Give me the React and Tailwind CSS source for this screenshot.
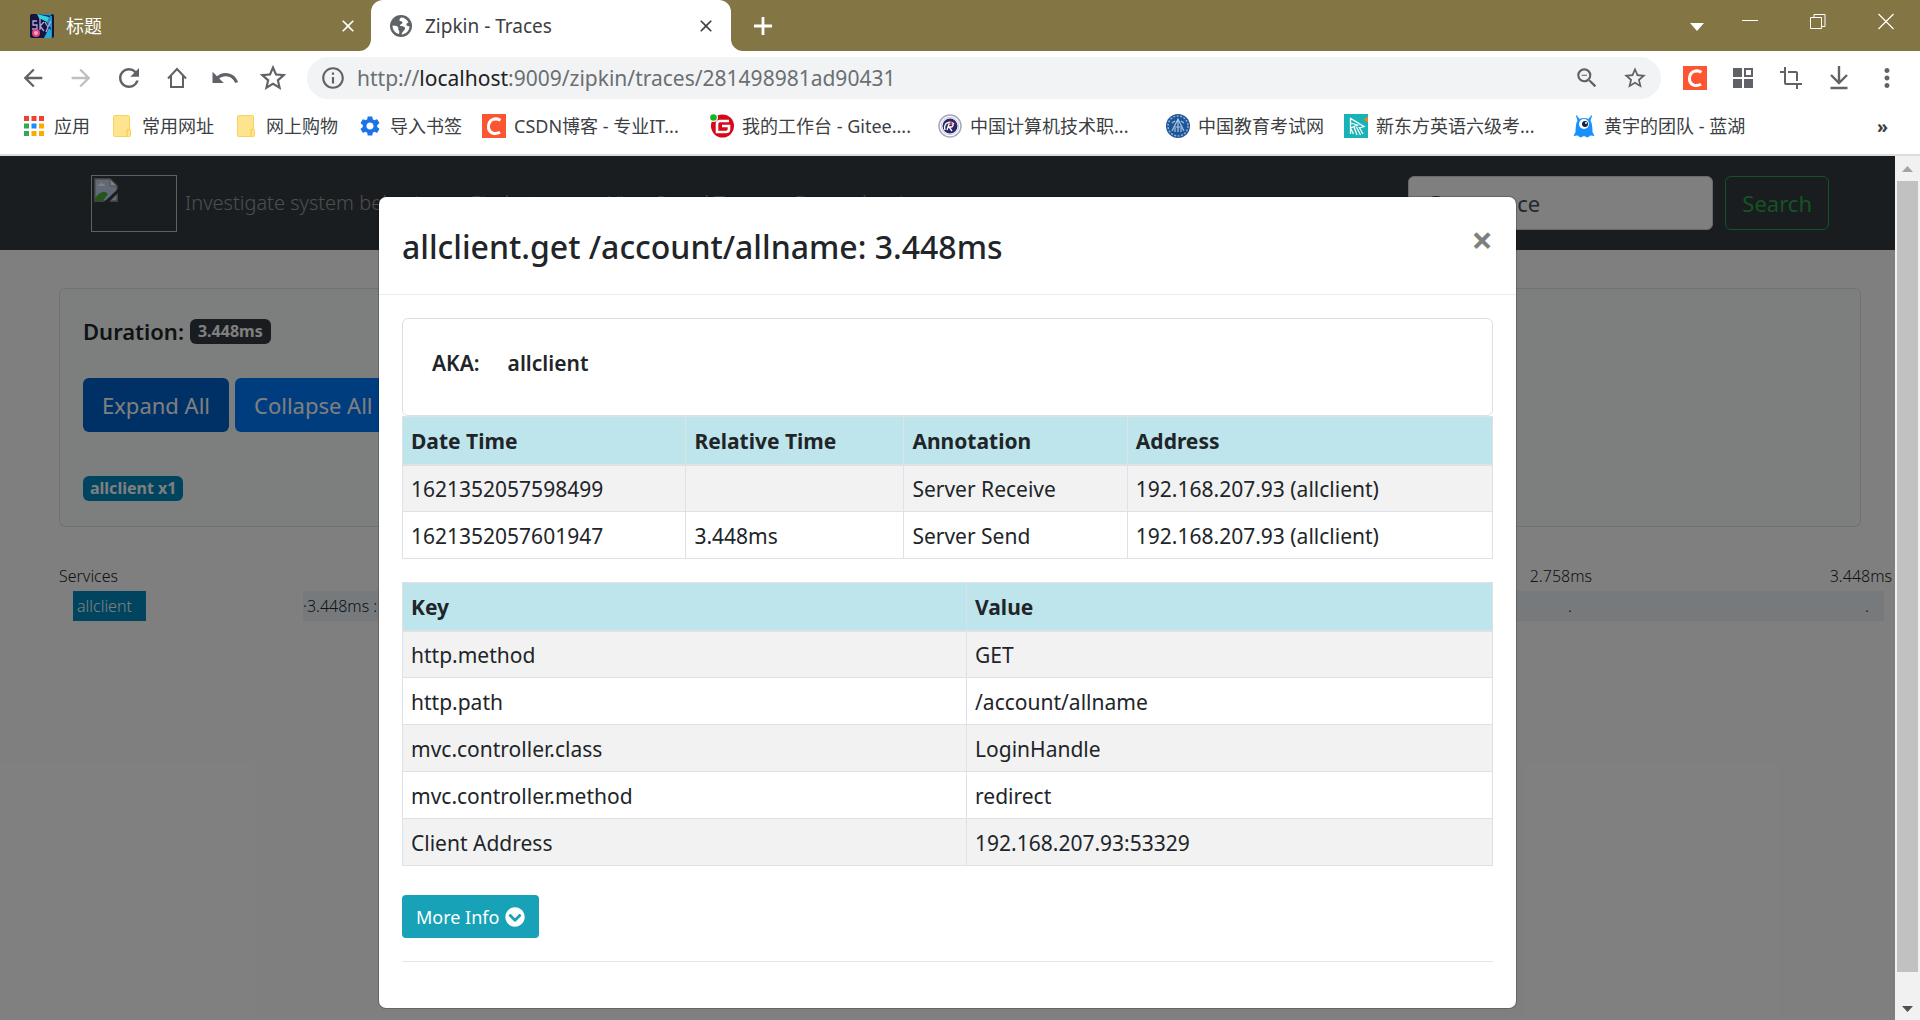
import { useState } from "react";
import {
  MdArrowBack,
  MdArrowForward,
  MdRefresh,
  MdUndo,
  MdStarOutline,
  MdInfoOutline,
  MdZoomOut,
  MdCrop,
  MdMoreVert,
  MdClose,
  MdSettings,
} from "react-icons/md";
import { FaChevronCircleDown } from "react-icons/fa";

const annotations = [
  { time: "1621352057598499", relative: "", name: "Server Receive", address: "192.168.207.93 (allclient)" },
  { time: "1621352057601947", relative: "3.448ms", name: "Server Send", address: "192.168.207.93 (allclient)" },
];

const tags = [
  ["http.method", "GET"],
  ["http.path", "/account/allname"],
  ["mvc.controller.class", "LoginHandle"],
  ["mvc.controller.method", "redirect"],
  ["Client Address", "192.168.207.93:53329"],
];

const timeMarks = ["2.758ms", "3.448ms"];

/* ---------- Icons ---------- */

const SkyIcon = () => (
  <svg className="w-6 h-6" viewBox="0 0 24 24">
    <rect width="24" height="24" rx="2" fill="#14143c" />
    <path d="M6 0h16l-6 7 5 8-3 9h4V2z" fill="#1f8fc4" />
    <path d="M7 0l12 3-2 5-8-4z" fill="#35d0e0" />
    <path d="M14 24l5-10 2 2v8z" fill="#2ba6d8" />
    <path d="M7 7H3v4h4v4H2M10 4v12M14 8l-4 4 4 5M15 8l3 5 3-6M18 13l-2 5" stroke="#b7a7dc" strokeWidth="1.300" fill="none" />
    <circle cx="6" cy="19" r="4" fill="#e0457f" />
    <circle cx="6" cy="19" r="2" fill="#ff9fb4" />
  </svg>
);

const GlobeIcon = () => (
  <svg className="w-[22px] h-[22px]" viewBox="0 0 22 22">
    <circle cx="11" cy="11" r="11" fill="#5f6368" />
    <path d="M11 2.500c-1 1-2 2-1.500 3 .5 1 3 .5 3 2s-2 1.500-2.500 2.500c-.5 1.500 3.500 1 4.500 2s.5 3-1 4c-1 1-1.500 2-2 3.500 5-.5 8-4 8-8.500-1.500.5-2.500 0-3-1s.5-2 2-2.500C17 4.500 14.500 2.500 11 2.500z" fill="#fff" />
    <path d="M2.500 10.500c2 .3 4.500.2 5.500 1.500s-.5 2 .5 3 1 2 .5 4C5 18 2.500 15 2.500 10.500z" fill="#fff" />
  </svg>
);

const HomeIcon = () => (
  <svg className="w-7 h-7" viewBox="0 0 28 28" fill="none" stroke="#5f6368" strokeWidth="2">
    <path d="M5 14.500L14 5l9 9.500M8 12v11h12V12" />
  </svg>
);

const AppsIcon = () => (
  <svg className="w-[20px] h-[20px]" viewBox="0 0 20 20">
    <path d="M0 0h5v5H0zM7.500 0h5v5h-5zM15 0h5v5h-5z" fill="#ea4335" />
    <path d="M0 7.500h5v5H0zM0 15h5v5H0z" fill="#34a853" />
    <path d="M7.500 7.500h5v5h-5z" fill="#1a8cff" />
    <path d="M15 7.500h5v5h-5zM7.500 15h5v5h-5zM15 15h5v5h-5z" fill="#fbab00" />
  </svg>
);

const FolderIcon = () => (
  <svg className="w-[18px] h-[22px]" viewBox="0 0 18 22">
    <path d="M.5 1.500a1 1 0 011-1h14a1 1 0 011 1V14l1 1v5.500a1 1 0 01-1 1h-15a1 1 0 01-1-1z" fill="#ffe48f" stroke="#fbd25b" />
    <path d="M14 21v-6.500h2.500" fill="none" stroke="#f7c948" />
  </svg>
);

const CsdnIcon = () => (
  <svg className="w-6 h-6" viewBox="0 0 24 24">
    <rect width="24" height="24" fill="#fc5531" />
    <path d="M18.500 6.200C14 3.500 7 5 6.500 12s6.500 9 11.500 6.200" stroke="#fff" strokeWidth="3" fill="none" />
  </svg>
);

const GiteeIcon = () => (
  <svg className="w-6 h-6" viewBox="0 0 24 24">
    <circle cx="12.500" cy="12" r="11.500" fill="#d8081b" />
    <path d="M19 7H10q-3 0-3 3v8h9q3 0 3-3v-3h-7" stroke="#fff" strokeWidth="2.600" fill="none" />
    <circle cx="3.500" cy="3.500" r="4.500" fill="#fff" />
    <circle cx="3.500" cy="3.500" r="3.300" fill="#0fb822" />
  </svg>
);

const RuankaoIcon = () => (
  <svg className="w-6 h-6" viewBox="0 0 24 24">
    <circle cx="12" cy="12" r="11" fill="#fff" stroke="#a7a6bd" strokeWidth="1.500" />
    <circle cx="12" cy="12" r="8.700" fill="none" stroke="#c9c8d8" />
    <circle cx="12" cy="12" r="7.500" fill="#29266b" />
    <path d="M7 16c-2-7 5-10 9-6M9 16l2-6h3c2 0 1 3-1 3h-2l3 4" stroke="#fff" strokeWidth="1.300" fill="none" />
    <circle cx="13" cy="9.500" r="1.500" fill="#d33" />
  </svg>
);

const ExamIcon = () => (
  <svg className="w-6 h-6" viewBox="0 0 24 24">
    <circle cx="12" cy="12" r="12" fill="#1d5596" />
    <circle cx="12" cy="12" r="10" fill="none" stroke="#8db0d6" strokeWidth="1.500" strokeDasharray="2 1.500" />
    <path d="M6 17l6-12 6 12M8 13h8M12 6v12M9 18v-4M15 18v-4M6 9l3-2M18 9l-3-2" stroke="#a9c6e3" strokeWidth="1.200" fill="none" />
  </svg>
);

const KoolearnIcon = () => (
  <svg className="w-6 h-6" viewBox="0 0 24 24">
    <rect width="24" height="24" fill="#17b3b6" />
    <path d="M19.500 5.500L24 2.500v6z" fill="#f58220" />
    <path d="M6.500 20V4.500L20 12.500l-5 1.500M6.500 9l7 2-7 3M10 13l3 8M12.500 13l4 8M15 13l4 7M6.500 14l3 6" stroke="#fff" strokeWidth="1.300" fill="none" />
  </svg>
);

const LanhuIcon = () => (
  <svg className="w-6 h-6" viewBox="0 0 24 24">
    <path d="M4.500 1l3 4q4.500-2 9 0l3-4 .5 1-1.500 4.500Q20.500 10 20.500 18l2 4-4-.5-3 2-3.500-1.500-3.500 1.500-3-2-4 .5 2-4Q3.500 10 5.500 6.500L4 2z" fill="#1890ff" />
    <circle cx="12" cy="10" r="5" fill="#fff" />
    <circle cx="13" cy="10" r="3" fill="#15233d" />
    <circle cx="14" cy="9" r="1" fill="#fff" />
  </svg>
);

const GridIcon = () => (
  <svg className="w-5 h-5" viewBox="0 0 20 20" fill="#5f6368">
    <path d="M0 0h9v9H0zM0 11h9v9H0zM11 11h9v9h-9z" />
    <path d="M12 1h7v7h-7z" fill="none" stroke="#5f6368" strokeWidth="2" />
  </svg>
);

const DownloadIcon = () => (
  <svg className="w-6 h-6" viewBox="0 0 24 24" fill="none" stroke="#5f6368" strokeWidth="2.400">
    <path d="M12 0v17M4 9l8 8 8-8M3.500 22h17" />
  </svg>
);

const BrokenImageIcon = () => (
  <svg className="w-6 h-6" viewBox="0 0 24 24">
    <path d="M1 1h15l7 7v15H1z" fill="#c4d3ee" stroke="#9a9a9a" strokeWidth="1.500" />
    <path d="M16 1v7h7z" fill="#fff" stroke="#9a9a9a" />
    <path d="M4 8q0-2 2-2 1-2 3 0 2 0 2 2z" fill="#fff" />
    <path d="M1 23v-3q8-10 13-4l-5 7z" fill="#4ca83a" />
    <path d="M10 24L24 11v4l-9 9z" fill="#343a40" />
  </svg>
);

const bookmarks = [
  { label: "应用", icon: <AppsIcon /> },
  { label: "常用网址", icon: <FolderIcon /> },
  { label: "网上购物", icon: <FolderIcon /> },
  { label: "导入书签", icon: <MdSettings className="w-6 h-6 text-[#1a73e8]" /> },
  { label: "CSDN博客 - 专业IT...", icon: <CsdnIcon />, wide: true },
  { label: "我的工作台 - Gitee....", icon: <GiteeIcon />, wide: true },
  { label: "中国计算机技术职...", icon: <RuankaoIcon />, wide: true },
  { label: "中国教育考试网", icon: <ExamIcon /> },
  { label: "新东方英语六级考...", icon: <KoolearnIcon />, wide: true },
  { label: "黄宇的团队 - 蓝湖", icon: <LanhuIcon /> },
];

/* ---------- Browser chrome ---------- */

const IconButton = ({ label, children }) => (
  <button type="button" aria-label={label} className="w-7 h-7 shrink-0 flex items-center justify-center text-[#5f6368]">
    {children}
  </button>
);

const TabStrip = () => (
  <div className="h-[51px] bg-[#847545] flex">
    <div className="w-[371px] flex items-center pl-[30px] pr-[13px] text-white">
      <SkyIcon />
      <span className="ml-3 flex-1 text-lg leading-6">标题</span>
      <button type="button" aria-label="Close tab">
        <MdClose className="w-5 h-5" />
      </button>
    </div>
    <div className="w-[360px] relative bg-white rounded-t-xl flex items-center pl-[19px] pr-[15px] text-[#3c4043]">
      <span className="absolute right-full bottom-0 w-3 h-3 bg-white">
        <span className="block w-3 h-3 rounded-br-xl bg-[#847545]" />
      </span>
      <GlobeIcon />
      <span className="ml-[13px] flex-1 text-[19px] leading-6">Zipkin - Traces</span>
      <button type="button" aria-label="Close tab">
        <MdClose className="w-5 h-5" />
      </button>
      <span className="absolute left-full bottom-0 w-3 h-3 bg-white">
        <span className="block w-3 h-3 rounded-bl-xl bg-[#847545]" />
      </span>
    </div>
    <button type="button" aria-label="New tab" className="ml-[22px] text-white">
      <svg className="w-5 h-5" viewBox="0 0 20 20" stroke="currentColor" strokeWidth="2.800">
        <path d="M10 1v18M1 10h18" />
      </svg>
    </button>
    <div className="flex-1" />
    <div className="flex items-start pt-3 pr-[25px] text-white">
      <button type="button" aria-label="Search tabs" className="mt-[11px] mr-9">
        <svg className="w-4 h-2" viewBox="0 0 16 8" fill="currentColor">
          <path d="M1 0h14L8 8z" />
        </svg>
      </button>
      <button type="button" aria-label="Minimize" className="mr-[50px]">
        <svg className="w-[18px] h-[18px]" viewBox="0 0 18 18" stroke="currentColor">
          <path d="M1 8.500h16" />
        </svg>
      </button>
      <button type="button" aria-label="Restore" className="mr-[50px]">
        <svg className="w-[18px] h-[18px]" viewBox="0 0 18 18" fill="none" stroke="currentColor">
          <path d="M1.500 5.500h11v11h-11zM5 5V2.500h11v12h-3.500" />
        </svg>
      </button>
      <button type="button" aria-label="Close window">
        <svg className="w-[18px] h-[18px]" viewBox="0 0 18 18" stroke="currentColor" strokeWidth="1.200">
          <path d="M1.500 2l15 15M16.500 2l-15 15" />
        </svg>
      </button>
    </div>
  </div>
);

const Toolbar = () => (
  <div className="h-[51px] pt-[3px] flex items-center gap-5 px-[19px]">
    <IconButton label="Back"><MdArrowBack className="w-7 h-7 shrink-0" /></IconButton>
    <IconButton label="Forward"><MdArrowForward className="w-7 h-7 shrink-0 text-[#bdbfc1]" /></IconButton>
    <IconButton label="Reload"><MdRefresh className="w-[30px] h-[30px] shrink-0" /></IconButton>
    <IconButton label="Home"><HomeIcon /></IconButton>
    <IconButton label="Undo"><MdUndo className="w-[30px] h-[30px] shrink-0" /></IconButton>
    <IconButton label="Bookmark"><MdStarOutline className="w-8 h-8 shrink-0" /></IconButton>
    <div className="flex-1 h-[42px] rounded-full bg-[#f1f3f4] flex items-center pl-[13px] pr-[13px] text-[#5f6368]">
      <MdInfoOutline className="w-[26px] h-[26px]" />
      <span className="ml-[11px] flex-1 text-[21px] leading-8 text-[#6b6f73]">
        http://<span className="text-[#202124]">localhost</span>:9009/zipkin/traces/281498981ad90431
      </span>
      <button type="button" aria-label="Zoom" className="mr-[22px]"><MdZoomOut className="w-[26px] h-[26px]" /></button>
      <button type="button" aria-label="Bookmark this page"><MdStarOutline className="w-[26px] h-[26px]" /></button>
    </div>
    <IconButton label="CSDN"><CsdnIcon /></IconButton>
    <IconButton label="Extensions"><GridIcon /></IconButton>
    <IconButton label="Capture"><MdCrop className="w-6 h-6" /></IconButton>
    <IconButton label="Downloads"><DownloadIcon /></IconButton>
    <IconButton label="Menu"><MdMoreVert className="w-[30px] h-[30px] shrink-0" /></IconButton>
  </div>
);

const BookmarksBar = () => (
  <div className="h-[54px] pb-1 pl-[22px] pr-8 flex items-center gap-5 border-b-2 border-[#dadce0] text-lg text-[#3c4043]">
    {bookmarks.map((item) => (
      <a
        key={item.label}
        href="#"
        className={`flex items-center gap-2 whitespace-nowrap ${item.wide ? "w-[208px]" : ""}`}
      >
        <span className="w-6 h-6 flex items-center justify-center shrink-0">{item.icon}</span>
        {item.label}
      </a>
    ))}
    <button type="button" aria-label="More bookmarks" className="ml-auto font-bold">»</button>
  </div>
);

/* ---------- Zipkin page ---------- */

const Navbar = () => (
  <nav className="h-[94px] bg-[#343a40] flex items-center pl-[91px] pr-[66px] text-[20px] font-light text-white/50">
    <a href="#" aria-label="Zipkin" className="w-[86px] h-[57px] p-0.5 border border-[#c0c0c0]">
      <BrokenImageIcon />
    </a>
    <span className="ml-2">Investigate system behavior</span>
    <a href="#" className="ml-8">Find a trace</a>
    <a href="#" className="ml-8">View Saved Trace</a>
    <a href="#" className="ml-8">Dependencies</a>
    <form className="ml-auto flex gap-3 font-normal" onSubmit={(e) => e.preventDefault()}>
      <input
        type="text"
        aria-label="Go to trace"
        placeholder="Go to trace"
        className="w-[305px] h-[54px] px-[17px] rounded-md border border-[#ced4da] bg-white text-[22px] placeholder:text-[#495057]"
      />
      <button type="submit" className="h-[54px] px-4 rounded-md border border-[#28a745] text-[22px] text-[#28a745]">
        Search
      </button>
    </form>
  </nav>
);

const TraceSummary = () => (
  <section className="mt-[38px] ml-[59px] mr-[34px] px-[23px] py-[25px] rounded-md border border-black/10 bg-[#fafffc]">
    <div className="h-[34px] flex items-center gap-1.5 text-[22px] font-semibold text-[#212529]">
      Duration:
      <span className="h-[25px] px-2 rounded-md bg-[#343a40] text-base leading-[25px] font-bold text-white">3.448ms</span>
    </div>
    <div className="mt-[30px] flex gap-1.5 text-[22px] text-white">
      <button type="button" className="h-[54px] px-[19px] rounded-md bg-[#0062cc]">Expand All</button>
      <button type="button" className="h-[54px] px-[19px] rounded-md bg-[#007bff]">Collapse All</button>
    </div>
    <div className="mt-11 flex">
      <span className="h-[25px] px-[7px] rounded-md bg-[#0089bf] text-base leading-[25px] font-bold text-white">allclient x1</span>
    </div>
  </section>
);

const Timeline = () => (
  <section className="mt-[37px] ml-[59px] text-base leading-6 font-light text-[#212529]">
    <div className="flex pr-[3px]">
      <span className="w-[333px]">Services</span>
      <div className="flex-1 grid grid-cols-5 text-right">
        {timeMarks.map((mark) => (
          <span key={mark} className="first:col-start-4">{mark}</span>
        ))}
      </div>
    </div>
    <div className="mt-[3px] flex h-[30px] leading-[30px] pl-[14px] pr-[11px]">
      <span className="w-[73px] pl-1 bg-[#0089bf] text-white">allclient</span>
      <div className="ml-[157px] flex-1 flex bg-[#ecf4fa]">
        <span className="w-[80px] whitespace-nowrap">·3.448ms :</span>
        <div className="flex-1 grid grid-cols-5 pr-[15px] text-right">
          {timeMarks.map((mark) => (
            <span key={mark} className="first:col-start-4">.</span>
          ))}
        </div>
      </div>
    </div>
  </section>
);

const headCell = "px-2 pt-0.5 h-12 text-left font-bold border border-b-2 border-[#dee2e6] bg-[#bee5eb]";
const bodyCell = "px-2 pt-0.5 h-[47px] border border-[#dee2e6]";

const SpanModal = ({ onClose }) => (
  <div className="absolute inset-0 bg-black/50 flex items-start justify-center pt-10">
    <div
      role="dialog"
      aria-labelledby="span-title"
      className="w-[1139px] max-w-full rounded-lg border border-black/20 bg-white bg-clip-padding text-[21px] leading-8 text-[#212529]"
    >
      <div className="h-[98px] px-[23px] pt-0.5 flex items-center justify-between border-b border-[#e9ecef]">
        <h4 id="span-title" className="text-[32px] font-medium">allclient.get /account/allname: 3.448ms</h4>
        <button type="button" aria-label="Close" onClick={onClose} className="pb-4 text-[38px] leading-8 font-bold text-black/50">
          ×
        </button>
      </div>

      <div className="px-[23px] pt-[23px] pb-[46px]">
        <div className="h-[98px] px-[29px] pt-7 flex items-start gap-7 rounded-md border border-[#dfdfdf] font-semibold">
          <span>AKA:</span>
          <span>allclient</span>
        </div>

        <table className="w-full table-fixed border-collapse">
          <thead>
            <tr>
              <th className={`${headCell} w-[26%]`}>Date Time</th>
              <th className={`${headCell} w-[20%]`}>Relative Time</th>
              <th className={`${headCell} w-[20.5%]`}>Annotation</th>
              <th className={headCell}>Address</th>
            </tr>
          </thead>
          <tbody>
            {annotations.map((a) => (
              <tr key={a.time} className="odd:bg-[#f2f2f2]">
                <td className={bodyCell}>{a.time}</td>
                <td className={bodyCell}>{a.relative}</td>
                <td className={bodyCell}>{a.name}</td>
                <td className={bodyCell}>{a.address}</td>
              </tr>
            ))}
          </tbody>
        </table>

        <table className="mt-[23px] w-full table-fixed border-collapse">
          <thead>
            <tr>
              <th className={`${headCell} w-[51.75%]`}>Key</th>
              <th className={headCell}>Value</th>
            </tr>
          </thead>
          <tbody>
            {tags.map(([key, value]) => (
              <tr key={key} className="odd:bg-[#f2f2f2]">
                <td className={bodyCell}>{key}</td>
                <td className={bodyCell}>{value}</td>
              </tr>
            ))}
          </tbody>
        </table>

        <button type="button" className="mt-[29px] h-[43px] px-[14px] flex items-center gap-1.5 rounded bg-[#17a2b8] text-lg text-white">
          More Info
          <FaChevronCircleDown className="w-5 h-5" />
        </button>
        <hr className="mt-[23px] border-black/10" />
      </div>
    </div>
  </div>
);

const Scrollbar = () => (
  <div className="w-[25px] bg-[#f1f1f1] flex flex-col items-center">
    <svg className="w-[25px] h-[25px]" viewBox="0 0 25 25">
      <path d="M7 16l5.500-6 5.500 6z" fill="#a3a3a3" />
    </svg>
    <div className="flex-1 w-[21px] bg-[#c1c1c1]" />
    <svg className="mt-6 w-[25px] h-6" viewBox="0 0 25 24">
      <path d="M7 10l5.500 6 5.500-6z" fill="#505050" />
    </svg>
  </div>
);

const App = () => {
  const [open, setOpen] = useState(true);

  return (
    <div className="min-h-screen flex flex-col bg-white font-['Noto_Sans','Noto_Sans_CJK_SC',sans-serif]">
      <header>
        <TabStrip />
        <Toolbar />
        <BookmarksBar />
      </header>
      <div className="flex-1 flex">
        <main className="flex-1 relative overflow-hidden bg-white">
          <Navbar />
          <TraceSummary />
          <Timeline />
          {open && <SpanModal onClose={() => setOpen(false)} />}
        </main>
        <Scrollbar />
      </div>
    </div>
  );
};

export default App;
